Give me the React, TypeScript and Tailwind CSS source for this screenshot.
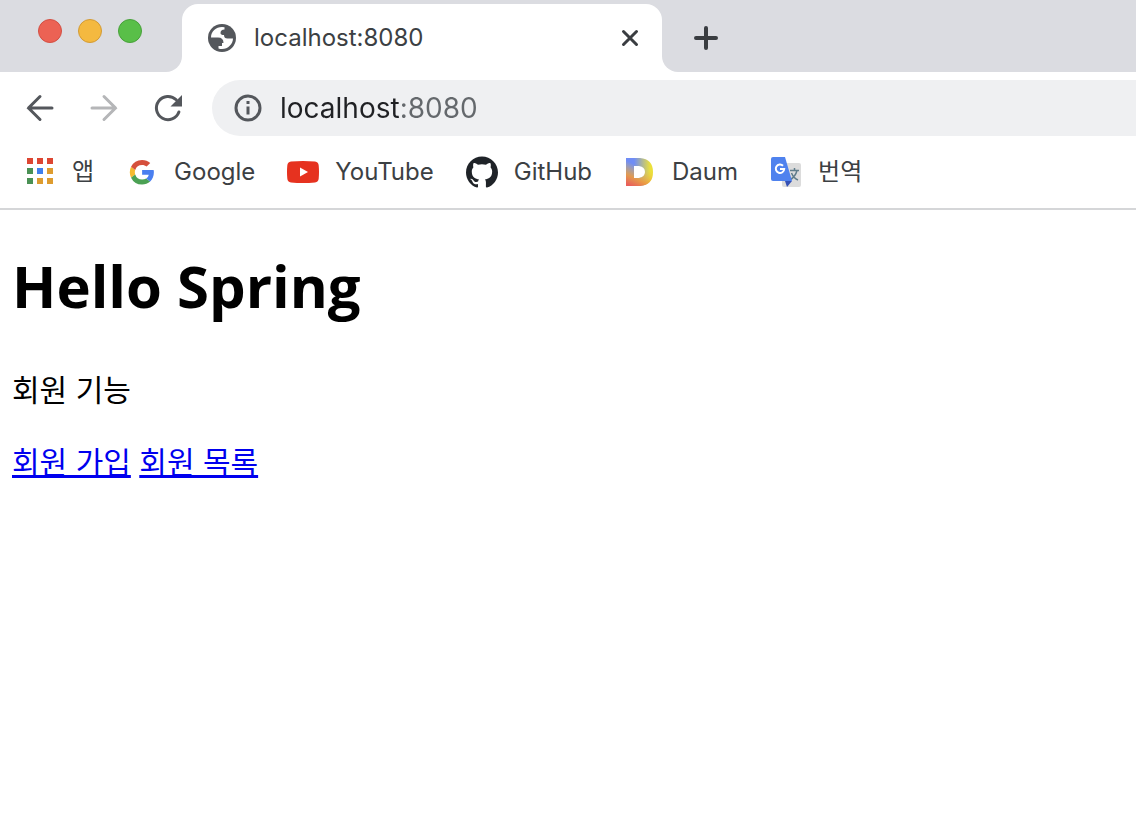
import type { ReactNode } from "react";
import { SiGithub } from "react-icons/si";

const UI_FONT = "font-['Inter','Noto_Sans_CJK_KR',sans-serif]";

const trafficLights = [
  { label: "닫기", className: "bg-[#ec6254] border-[#d34f43]" },
  { label: "최소화", className: "bg-[#f4b940] border-[#d39b35]" },
  { label: "최대화", className: "bg-[#59bf48] border-[#48a13a]" },
];

const appDots = [
  "#dd4632", "#dd4632", "#dd4632",
  "#4a9154", "#4080ee", "#de9c2f",
  "#4a9154", "#de9c2f", "#de9c2f",
];

export default function App() {
  return (
    <div className="min-h-screen bg-white">
      <div className={UI_FONT}>
        <TabStrip />
        <Toolbar />
        <BookmarksBar />
      </div>
      <HomePage />
    </div>
  );
}

function TabStrip() {
  return (
    <div className="flex h-[72px] bg-white">
      <div className="flex w-[182px] shrink-0 gap-4 rounded-br-2xl bg-[#dbdce1] pl-[38px] pt-[19px]">
        {trafficLights.map((light) => (
          <button
            key={light.label}
            aria-label={light.label}
            className={`size-6 rounded-full border ${light.className}`}
          />
        ))}
      </div>

      {/* Active tab */}
      <div className="w-[480px] shrink-0 bg-[linear-gradient(to_bottom,#dbdce1_50%,#fff_50%)] pt-1">
        <div className="flex h-[68px] items-center rounded-t-2xl bg-white pl-[26px] pr-[22px]">
          <GlobeIcon />
          <span className="ml-[18px] flex-1 text-2xl text-[#3c4043]">localhost:8080</span>
          <button aria-label="탭 닫기">
            <svg width="20" height="20" viewBox="0 0 20 20" stroke="#3a3d41" strokeWidth="3" strokeLinecap="round">
              <path d="M3.5 3.5l13 13M16.5 3.5l-13 13" />
            </svg>
          </button>
        </div>
      </div>

      <div className="flex flex-1 items-center rounded-bl-2xl bg-[#dbdce1] pl-8 pt-1">
        <button aria-label="새 탭">
          <svg width="24" height="24" viewBox="0 0 24 24" stroke="#3a3d41" strokeWidth="4" strokeLinecap="round">
            <path d="M12 2v20M2 12h20" />
          </svg>
        </button>
      </div>
    </div>
  );
}

function Toolbar() {
  return (
    <div className="flex h-[72px] items-center pl-6">
      <button aria-label="뒤로">
        <ArrowIcon color="#54575c" />
      </button>
      <button aria-label="앞으로" className="ml-8 rotate-180">
        <ArrowIcon color="#b5b6b8" />
      </button>
      <button aria-label="새로고침" className="ml-8">
        <svg width="32" height="32" viewBox="0 0 32 32" fill="none">
          <path d="M26.900 20A11.600 11.600 0 1 1 24.200 7.800" stroke="#54575c" strokeWidth="3" strokeLinecap="round" />
          <path d="M30 3v11.500H18.500z" fill="#54575c" />
        </svg>
      </button>
      <div className="ml-7 flex h-14 flex-1 items-center rounded-l-full bg-[#eff0f2] pl-[22px]">
        <svg width="28" height="28" viewBox="0 0 28 28" fill="none" className="shrink-0">
          <circle cx="14" cy="14" r="12" stroke="#54575c" strokeWidth="3" />
          <path d="M14 7v3M14 12.500v8" stroke="#54575c" strokeWidth="3" />
        </svg>
        <input
          aria-label="주소창"
          defaultValue="localhost:8080"
          className="ml-[18px] w-full bg-[linear-gradient(to_right,#202124_121px,#64686c_121px)] bg-clip-text text-[28px] leading-9 text-transparent outline-none"
        />
      </div>
    </div>
  );
}

function BookmarksBar() {
  return (
    <nav className="flex h-[66px] items-center gap-8 border-b-2 border-[#d5d6d8] pb-2 pl-6">
      <Bookmark label="앱" icon={<AppsIcon />} />
      <Bookmark label="Google" icon={<GoogleIcon />} />
      <Bookmark label="YouTube" icon={<YouTubeIcon />} />
      <Bookmark label="GitHub" icon={<SiGithub size={32} color="#1f2328" />} />
      <Bookmark label="Daum" icon={<DaumIcon />} />
      <Bookmark label="번역" icon={<TranslateIcon />} />
    </nav>
  );
}

function Bookmark({ label, icon }: { label: string; icon: ReactNode }) {
  return (
    <a href="#" className="flex items-center gap-4 text-2xl text-[#3c4043]">
      {icon}
      {label}
    </a>
  );
}

function HomePage() {
  return (
    <main className="px-3 pt-7 font-['Inter','Noto_Sans_CJK_KR',sans-serif] text-[30px] leading-10 text-black">
      <h1 className="font-['Open_Sans',sans-serif] text-[58px] font-bold leading-[96px]">Hello Spring</h1>
      <p className="mt-9">회원 기능</p>
      <p className="mt-8">
        <a href="#" className="text-[#0000ee] underline">회원 가입</a>{" "}
        <a href="#" className="text-[#0000ee] underline">회원 목록</a>
      </p>
    </main>
  );
}

function ArrowIcon({ color }: { color: string }) {
  return (
    <svg width="32" height="32" viewBox="0 0 32 32" fill="none" stroke={color} strokeWidth="3" strokeLinecap="round">
      <path d="M28 16H4.500M16 4.500L4.500 16L16 27.500" />
    </svg>
  );
}

function GlobeIcon() {
  return (
    <svg width="28" height="28" viewBox="0 0 28 28">
      <circle cx="14" cy="14" r="14" fill="#54575c" />
      <path
        d="M3 13.500C3 7.500 8 3 14 3q1.500 0 2.500.3v2.200q-4 0-4 3.500 0 2 3.500 2 0 3.500 3.500 3.500H25C25 20 20 25 14 25q-2 0-3.500-.5V22H14v-3h1.500q0-5.500-5.500-5.500z"
        fill="#fff"
      />
    </svg>
  );
}

function AppsIcon() {
  return (
    <svg width="32" height="32" viewBox="0 0 32 32">
      {appDots.map((color, i) => (
        <rect key={i} x={3 + (i % 3) * 10} y={2 + Math.floor(i / 3) * 10} width="6" height="6" fill={color} />
      ))}
    </svg>
  );
}

function GoogleIcon() {
  return (
    <svg width="32" height="32" viewBox="-7 -7 61 61">
      <path fill="#f5bb30" d="M9.827 24c0-1.524.253-2.986.705-4.356l-7.909-6.040A23.456 23.456 0 0 0 .214 24c0 3.737.868 7.260 2.407 10.388l7.905-6.050A13.885 13.885 0 0 1 9.827 24" />
      <path fill="#d5503c" d="M23.714 10.133c3.311 0 6.302 1.174 8.652 3.094l6.836-6.827C35.036 2.773 29.695.533 23.714.533a23.430 23.430 0 0 0-21.090 13.071l7.908 6.040a13.849 13.849 0 0 1 13.182-9.510" />
      <path fill="#4ba154" d="M23.714 37.867a13.849 13.849 0 0 1-13.182-9.510l-7.909 6.038a23.430 23.430 0 0 0 21.090 13.072c5.732 0 11.205-2.036 15.312-5.849l-7.507-5.804c-2.118 1.335-4.786 2.053-7.804 2.053" />
      <path fill="#4a7ff0" d="M46.145 24c0-1.387-.213-2.880-.534-4.267H23.714V28.800h12.604c-.63 3.091-2.346 5.468-4.800 7.014l7.507 5.804C43.339 37.614 46.145 31.649 46.145 24" />
    </svg>
  );
}

function YouTubeIcon() {
  return (
    <svg width="32" height="32" viewBox="0 0 32 32">
      <path d="M4 5.500Q16 4.500 28 5.500Q31.500 6 31.700 9.500Q32.300 16 31.700 22.500Q31.500 26 28 26.500Q16 27.500 4 26.500Q.5 26 .3 22.500Q-.3 16 .3 9.500Q.5 6 4 5.500z" fill="#e6321f" />
      <path d="M13 11.500v9l8-4.500z" fill="#fff" />
    </svg>
  );
}

function DaumIcon() {
  return (
    <svg width="32" height="32" viewBox="0 0 32 32">
      <defs>
        <linearGradient id="daum-base" x1="0" y1="0" x2="1" y2="0">
          <stop offset="0.300" stopColor="#708df5" />
          <stop offset="0.900" stopColor="#ebe03c" />
        </linearGradient>
        <linearGradient id="daum-warm" x1="0.500" y1="0.300" x2="0.200" y2="1">
          <stop offset="0" stopColor="#eec53e" stopOpacity="0" />
          <stop offset="0.600" stopColor="#f09a3c" stopOpacity="0.900" />
          <stop offset="1" stopColor="#e9605a" />
        </linearGradient>
      </defs>
      <path d="M2 2h14q13 1 13 14t-13 14H2zM10 10v12h5q6-1 6-6t-6-6z" fill="url(#daum-base)" fillRule="evenodd" />
      <path d="M2 2h14q13 1 13 14t-13 14H2zM10 10v12h5q6-1 6-6t-6-6z" fill="url(#daum-warm)" fillRule="evenodd" />
    </svg>
  );
}

function TranslateIcon() {
  return (
    <svg width="32" height="32" viewBox="0 0 32 32" fill="none">
      <rect x="12" y="7" width="19" height="24" rx="2" fill="#dcdcdc" />
      <path d="M20 14.500h9M24.500 12v2.500M27 14.500q-1.500 6-7 9.500M21.500 17q2 5 6.500 7" stroke="#607d8b" strokeWidth="1.500" />
      <path d="M15 25h7l-5 6z" fill="#3450b5" />
      <path d="M3 1h12l7 24H3q-2 0-2-2V3q0-2 2-2z" fill="#4f82ee" />
      <path d="M13 9.800a4.200 4.200 0 1 0 1.200 3.200H10" stroke="#fff" strokeWidth="2" />
    </svg>
  );
}
